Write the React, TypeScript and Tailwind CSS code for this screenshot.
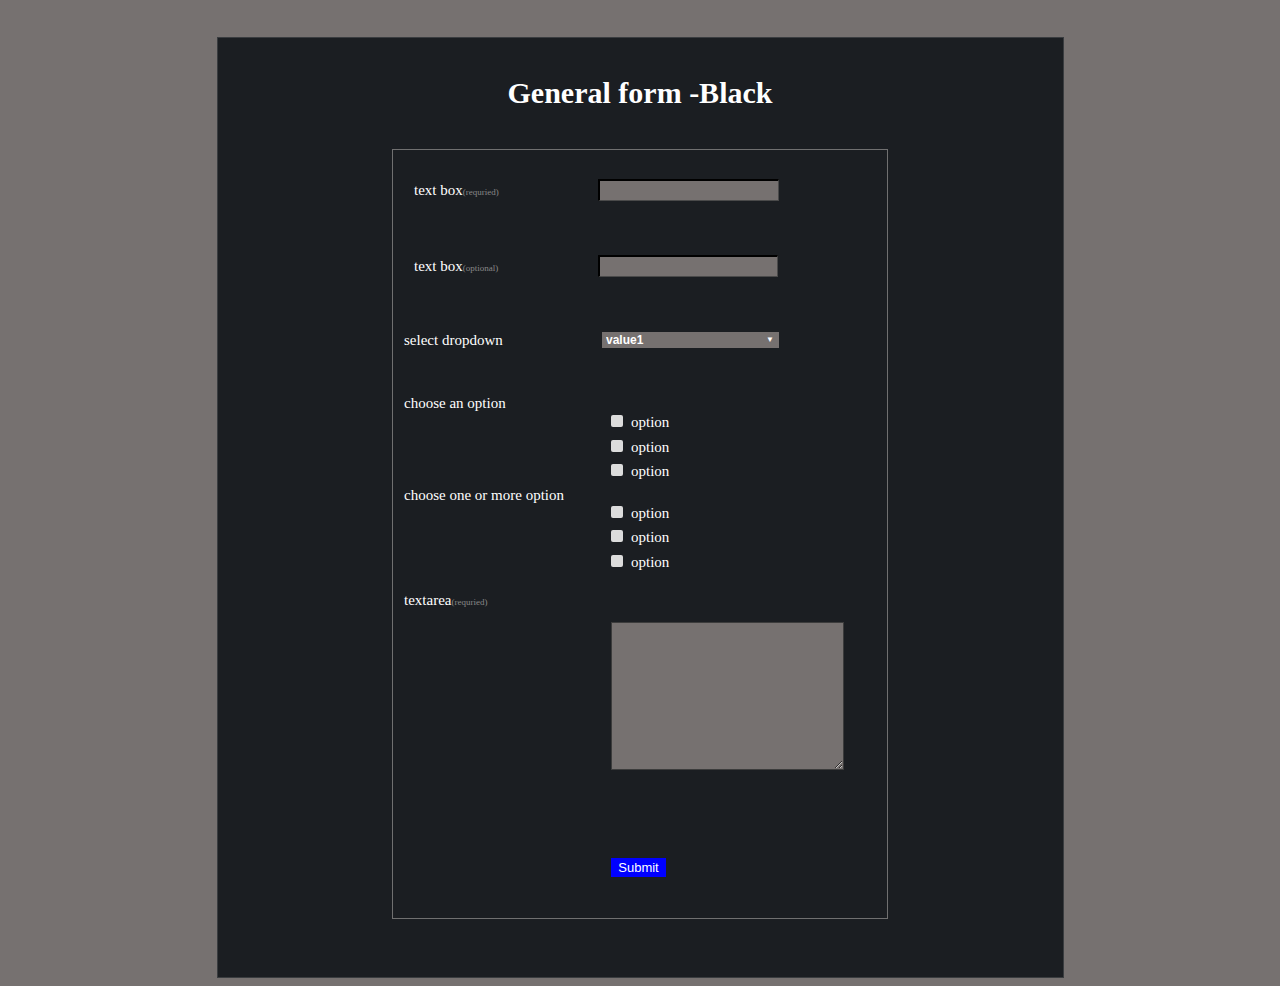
const serif = { fontFamily: '"Liberation Serif", "Times New Roman", serif' };
const sans = { fontFamily: '"Liberation Sans", Arial, sans-serif' };

function Options() {
  return (
    <div className="pl-[214px]">
      {['option', 'option', 'option'].map((o, i) => (
        <label key={i} className="flex items-center h-[24.5px] text-[15px] text-white">
          <input type="checkbox" className="appearance-none w-[12px] h-[12px] rounded-[2px] bg-[#dcdcdc] ml-[4px] mr-[8px] mb-[2px]" />
          {o}
        </label>
      ))}
    </div>
  );
}

export default function App() {
  return (
    <div className="min-h-screen bg-[#767170] pt-[37px]" style={serif}>
      <div className="mx-auto w-[847px] h-[941px] bg-[#1b1e22] border border-[#3a3d40] pt-[35px]">
        <h1 className="text-center text-[30px] leading-[40px] font-bold text-white">General form -Black</h1>

        <form className="mx-auto mt-[36px] w-[496px] h-[770px] border border-[#707070]" onSubmit={(e) => e.preventDefault()}>
          <div className="flex items-center h-[22px] mt-[29px]">
            <div className="w-[205px] pl-[21px] text-[15px] text-white">
              text box<span className="text-[9px] text-[#888]">(requried)</span>
            </div>
            <input className="w-[181px] h-[22px] bg-[#767170] border-t-2 border-l-2 border-b border-r border-t-black border-l-black border-b-[#4a4a4a] border-r-[#4a4a4a] outline-none" />
          </div>

          <div className="flex items-center h-[22px] mt-[54px]">
            <div className="w-[205px] pl-[21px] text-[15px] text-white">
              text box<span className="text-[9px] text-[#888]">(optional)</span>
            </div>
            <input className="w-[180px] h-[22px] bg-[#767170] border-t-2 border-l-2 border-b border-r border-t-black border-l-black border-b-[#4a4a4a] border-r-[#4a4a4a] outline-none" />
          </div>

          <div className="flex items-center h-[16px] mt-[55px]">
            <div className="w-[209px] pl-[11px] text-[15px] text-white">select dropdown</div>
            <div className="relative w-[177px] h-[16px]">
              <select className="block appearance-none w-full h-[16px] bg-[#767170] text-white text-[12px] font-bold pl-[4px] py-0 leading-[16px] outline-none" style={sans}>
                <option>value1</option>
                <option>value2</option>
              </select>
              <span className="absolute right-[5px] top-[3px] text-[8px] leading-[10px] text-white pointer-events-none">▼</span>
            </div>
          </div>

          <div className="mt-[48px] pl-[11px] h-[14px] leading-[14px] text-[15px] text-white">choose an option</div>
          <Options />

          <div className="mt-[4px] pl-[11px] h-[14px] leading-[14px] text-[15px] text-white">choose one or more option</div>
          <div className="-mt-[1px]">
            <Options />
          </div>

          <div className="mt-[19px] pl-[11px] h-[14px] leading-[14px] text-[15px] text-white">
            textarea<span className="text-[9px] text-[#888]">(requried)</span>
          </div>

          <div className="pl-[218px] mt-[15px]">
            <textarea className="block w-[233px] h-[148px] bg-[#767170] border border-[#3c3c3c] outline-none" />
          </div>

          <div className="pl-[218px] mt-[85px]">
            <button type="submit" className="w-[55px] h-[19px] bg-[#0000ff] text-white text-[13px] leading-[19px]" style={sans}>
              Submit
            </button>
          </div>
        </form>
      </div>
    </div>
  );
}
